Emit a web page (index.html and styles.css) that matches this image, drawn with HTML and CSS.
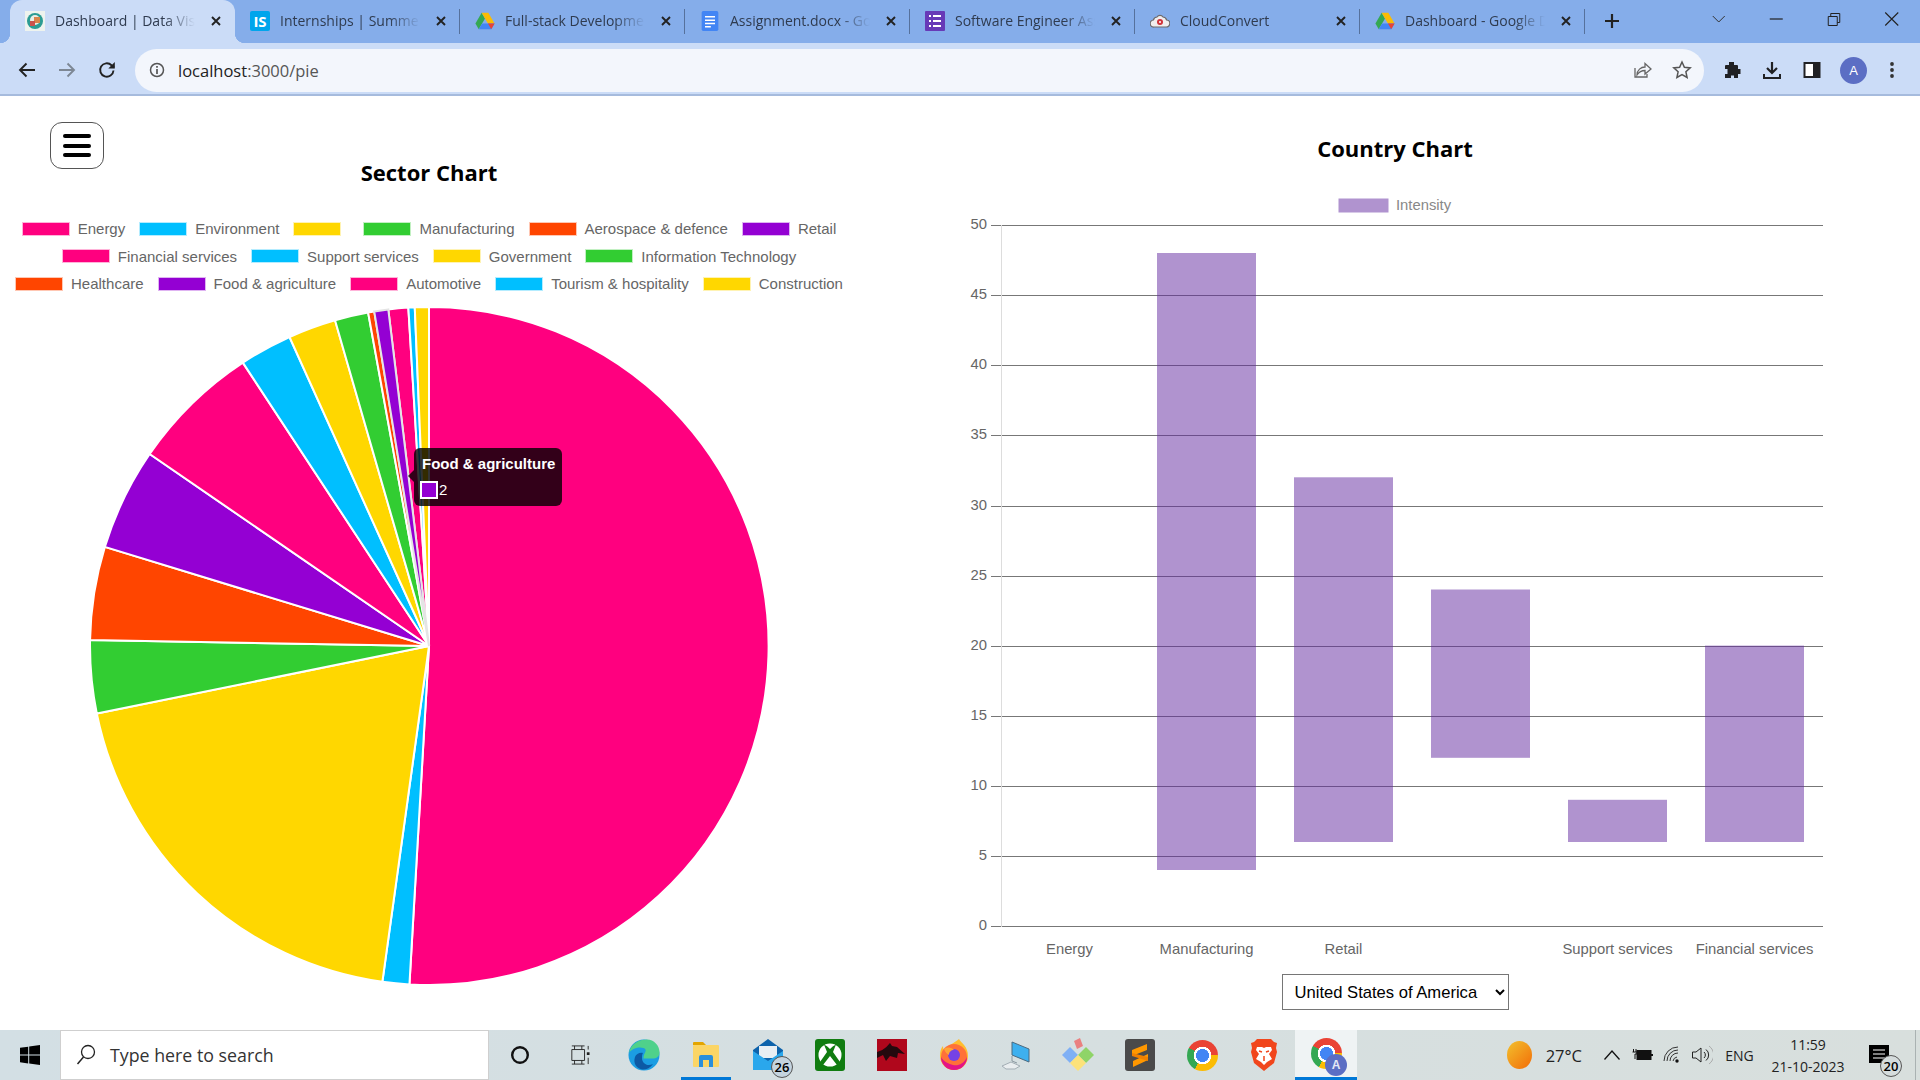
FILE: index.html
```html
<!DOCTYPE html>
<html>
<head>
    <title>Dashboard | Data Visualization</title>
    <link rel="stylesheet" href="styles.css">
</head>
<body>
    <!-- shared logos -->
    <svg class="defs" width="0" height="0">
        <symbol id="drive" viewBox="0 0 24 22">
            <polygon points="8,1 0.5,14 4.5,21 12,8" fill="#34a853"/>
            <polygon points="8,1 16,1 23.5,14 15.5,14" fill="#fbbc04"/>
            <polygon points="4.5,21 19.5,21 23.5,14 8.5,14" fill="#4285f4"/>
            <polygon points="19.5,21 23.5,14 15.5,14" fill="#ea4335"/>
        </symbol>
        <symbol id="close" viewBox="0 0 12 12">
            <path d="M2 2l8 8M10 2l-8 8" stroke="#222" stroke-width="1.9" fill="none"/>
        </symbol>
    </svg>

    <header class="tabstrip">
        <div class="tab active">
            <svg class="favicon" viewBox="0 0 20 20">
                <rect width="20" height="20" fill="#eef3ee"/>
                <circle cx="10" cy="10" r="8" fill="#2b9c93"/>
                <circle cx="10" cy="9" r="5" fill="#e8eee6"/>
                <rect x="9" y="6" width="6" height="6" fill="#d9854a"/>
                <rect x="5" y="10" width="5" height="5" fill="#c9534d"/>
            </svg>
            <span class="tab-title">Dashboard | Data Visualization</span>
            <svg class="tab-close"><use href="#close"/></svg>
        </div>
        <div class="tab sep">
            <svg class="favicon" viewBox="0 0 20 20">
                <rect width="20" height="20" rx="2" fill="#00a5ec"/>
                <text x="10" y="15.5" text-anchor="middle" class="is-mark">IS</text>
            </svg>
            <span class="tab-title">Internships | Summer Training</span>
            <svg class="tab-close"><use href="#close"/></svg>
        </div>
        <div class="tab sep">
            <svg class="favicon"><use href="#drive"/></svg>
            <span class="tab-title">Full-stack Development Assignment</span>
            <svg class="tab-close"><use href="#close"/></svg>
        </div>
        <div class="tab sep">
            <svg class="favicon" viewBox="0 0 20 24">
                <rect width="20" height="24" rx="2" fill="#4285f4"/>
                <path d="M4 7h12M4 11h12M4 15h12M4 19h7" stroke="#fff" stroke-width="1.8"/>
            </svg>
            <span class="tab-title">Assignment.docx - Google Docs</span>
            <svg class="tab-close"><use href="#close"/></svg>
        </div>
        <div class="tab sep">
            <svg class="favicon" viewBox="0 0 20 20">
                <rect width="20" height="20" rx="1" fill="#673ab7"/>
                <path d="M8 5h8M8 10h8M8 15h8M4 5h2M4 10h2M4 15h2" stroke="#fff" stroke-width="2"/>
            </svg>
            <span class="tab-title">Software Engineer Assignment</span>
            <svg class="tab-close"><use href="#close"/></svg>
        </div>
        <div class="tab sep">
            <svg class="favicon" viewBox="0 0 20 20">
                <path d="M4 16a3.5 3.5 0 0 1-.6-7A4 4 0 0 1 7 6a3.6 3.6 0 0 1 6 0 4 4 0 0 1 3.6 3A3.5 3.5 0 0 1 16 16z" fill="#f1eeee" stroke="#6d6a6a" stroke-width="1.2"/>
                <circle cx="10" cy="11" r="3" fill="#d0333a"/>
                <circle cx="10" cy="11" r="1" fill="#fff"/>
            </svg>
            <span class="tab-title">CloudConvert</span>
            <svg class="tab-close"><use href="#close"/></svg>
        </div>
        <div class="tab sep">
            <svg class="favicon"><use href="#drive"/></svg>
            <span class="tab-title">Dashboard - Google Drive</span>
            <svg class="tab-close"><use href="#close"/></svg>
        </div>
        <svg class="new-tab" viewBox="0 0 16 16">
            <path d="M8 1v14M1 8h14" stroke="#222" stroke-width="2.2"/>
        </svg>
        <div class="window-controls">
            <svg class="win-icon" viewBox="0 0 16 16"><path d="M2 5l6 6 6-6" stroke="#333" fill="none"/></svg>
            <svg class="win-icon" viewBox="0 0 16 16"><path d="M1 8h13" stroke="#222" stroke-width="1.2"/></svg>
            <svg class="win-icon" viewBox="0 0 16 16"><path d="M2.5 5.5h9v9h-9zM5 5.500v-3h9v9h-2.500" stroke="#222" fill="none"/></svg>
            <svg class="win-icon" viewBox="0 0 16 16"><path d="M1.500 1.500l13 13M14.500 1.500l-13 13" stroke="#222" stroke-width="1.100"/></svg>
        </div>
    </header>

    <div class="toolbar">
        <svg class="tool-icon first" viewBox="0 0 20 20"><path d="M18 10H3M9.500 3.500L3 10l6.500 6.500" stroke="#222" stroke-width="1.900" fill="none"/></svg>
        <svg class="tool-icon" viewBox="0 0 20 20"><path d="M2 10h15M10.500 3.500L17 10l-6.500 6.500" stroke="#7d8794" stroke-width="1.900" fill="none"/></svg>
        <svg class="tool-icon" viewBox="0 0 20 20"><path d="M16.500 10.500a6.700 6.700 0 1 1-2-5.300L17 7.500" stroke="#222" stroke-width="1.900" fill="none"/><path d="M17.800 2v6.500h-6.500z" fill="#222"/></svg>
        <div class="omnibox">
            <svg class="info-icon" viewBox="0 0 16 16">
                <circle cx="8" cy="8" r="6.500" stroke="#555" stroke-width="1.500" fill="none"/>
                <path d="M8 7v5M8 4v1.800" stroke="#555" stroke-width="1.700"/>
            </svg>
            <span class="url"><b>localhost</b>:3000/pie</span>
            <svg class="omni-icon share" viewBox="0 0 20 20">
                <path d="M3 8v9h12v-3" stroke="#666" stroke-width="1.300" fill="none"/>
                <path d="M5 15c0-5 4-8 8-8V3.500L19 9l-6 5v-3.500c-4 0-6 1.500-8 4.500z" stroke="#666" stroke-width="1.300" fill="#f3f6fc"/>
            </svg>
            <svg class="omni-icon" viewBox="0 0 20 20">
                <path d="M10 2l2.400 5.300 5.800.6-4.300 3.900 1.200 5.700L10 14.600l-5.100 2.900 1.200-5.700L1.800 7.900l5.800-.6z" stroke="#555" stroke-width="1.500" fill="none"/>
            </svg>
        </div>
        <div class="tool-actions">
            <svg class="tool-icon" viewBox="0 0 20 20"><path d="M7 2h5v3h3a1 1 0 0 1 1 1v3h2.500v5H16v4h-4v-2.500H9V18H3v-4h2.500V9H3V6a1 1 0 0 1 1-1h3z" fill="#202124"/></svg>
            <svg class="tool-icon" viewBox="0 0 20 20"><path d="M10 2v10M5 8l5 5 5-5" stroke="#202124" stroke-width="2.200" fill="none"/><path d="M2 14v4h16v-4" stroke="#202124" stroke-width="2" fill="none"/></svg>
            <svg class="tool-icon" viewBox="0 0 20 20"><rect x="2.500" y="3" width="15" height="14" fill="#fff" stroke="#202124" stroke-width="2"/><rect x="11" y="3" width="6.500" height="14" fill="#202124"/></svg>
            <span class="avatar">A</span>
            <svg class="tool-icon last" viewBox="0 0 20 20"><circle cx="10" cy="4" r="1.900" fill="#333"/><circle cx="10" cy="10" r="1.900" fill="#333"/><circle cx="10" cy="16" r="1.900" fill="#333"/></svg>
        </div>
    </div>

    <main class="content">
        <section class="sector-panel">
            <button class="menu-btn"><span></span><span></span><span></span></button>
            <h2 class="chart-title">Sector Chart</h2>
            <div class="legend">
                <div class="legend-row">
                    <span class="legend-item"><i class="pink"></i>Energy</span>
                    <span class="legend-item"><i class="blue"></i>Environment</span>
                    <span class="legend-item"><i class="gold"></i></span>
                    <span class="legend-item"><i class="green"></i>Manufacturing</span>
                    <span class="legend-item"><i class="orange"></i>Aerospace &amp; defence</span>
                    <span class="legend-item"><i class="violet"></i>Retail</span>
                </div>
                <div class="legend-row">
                    <span class="legend-item"><i class="pink"></i>Financial services</span>
                    <span class="legend-item"><i class="blue"></i>Support services</span>
                    <span class="legend-item"><i class="gold"></i>Government</span>
                    <span class="legend-item"><i class="green"></i>Information Technology</span>
                </div>
                <div class="legend-row">
                    <span class="legend-item"><i class="orange"></i>Healthcare</span>
                    <span class="legend-item"><i class="violet"></i>Food &amp; agriculture</span>
                    <span class="legend-item"><i class="pink"></i>Automotive</span>
                    <span class="legend-item"><i class="blue"></i>Tourism &amp; hospitality</span>
                    <span class="legend-item"><i class="gold"></i>Construction</span>
                </div>
            </div>
            <div class="pie-wrap">
                <svg class="pie" width="682" height="682" viewBox="0 0 680 680">
                    <g stroke="#fff" stroke-width="2">
                        <path fill="#ff007f" d="M340 340L340 2A338 338 0 1 1 320.500 677.400Z"/>
                        <path fill="#00bfff" d="M340 340L320.500 677.400A338 338 0 0 1 293.500 674.800Z"/>
                        <path fill="#ffd700" d="M340 340L293.500 674.800A338 338 0 0 1 8.800 407.400Z"/>
                        <path fill="#32cd32" d="M340 340L8.800 407.400A338 338 0 0 1 2.050 334.100Z"/>
                        <path fill="#ff4500" d="M340 340L2.050 334.100A338 338 0 0 1 16.800 241.200Z"/>
                        <path fill="#9400d3" d="M340 340L16.800 241.200A338 338 0 0 1 61.500 148.600Z"/>
                        <path fill="#ff007f" d="M340 340L61.500 148.600A338 338 0 0 1 154.400 57.500Z"/>
                        <path fill="#00bfff" d="M340 340L154.400 57.500A338 338 0 0 1 200.900 31.900Z"/>
                        <path fill="#ffd700" d="M340 340L200.900 31.900A338 338 0 0 1 246.300 15.200Z"/>
                        <path fill="#32cd32" d="M340 340L246.300 15.200A338 338 0 0 1 279.300 7.500Z"/>
                        <path fill="#ff4500" d="M340 340L279.300 7.500A338 338 0 0 1 285.400 6.400Z"/>
                        <path fill="#ff007f" d="M340 340L299.400 4.400A338 338 0 0 1 319.400 2.600Z"/>
                        <path fill="#00bfff" d="M340 340L319.400 2.600A338 338 0 0 1 325.800 2.300Z"/>
                        <path fill="#ffd700" d="M340 340L325.800 2.300A338 338 0 0 1 340 2Z"/>
                        <path fill="#9400d3" stroke="#e4e4e4" d="M340 340L285.400 6.400A338 338 0 0 1 299.400 4.400Z"/>
                    </g>
                </svg>
                <div class="pie-tooltip">
                    <div class="tip-title">Food &amp; agriculture</div>
                    <div class="tip-body"><i class="tip-swatch"></i>2</div>
                </div>
            </div>
        </section>

        <section class="country-panel">
            <h2 class="chart-title">Country Chart</h2>
            <svg class="bars" width="890" height="770" viewBox="0 0 890 770">
                <rect class="bar" x="388.500" y="8.500" width="50" height="14"/>
                <text class="axis-label legend-label" x="446" y="16">Intensity</text>

                <g class="grid">
                    <path d="M41 35.500H873M41 105.500H873M41 175.500H873M41 245.500H873M41 316.500H873M41 386.500H873M41 456.500H873M41 526.500H873M41 596.500H873M41 666.500H873M41 736.500H873"/>
                </g>
                <path class="y-axis" d="M51.500 35V737"/>

                <g class="y-ticks">
                    <text x="37" y="35.500">50</text>
                    <text x="37" y="105.500">45</text>
                    <text x="37" y="175.500">40</text>
                    <text x="37" y="245.500">35</text>
                    <text x="37" y="316">30</text>
                    <text x="37" y="386">25</text>
                    <text x="37" y="456">20</text>
                    <text x="37" y="526">15</text>
                    <text x="37" y="596">10</text>
                    <text x="37" y="666">5</text>
                    <text x="37" y="736">0</text>
                </g>

                <rect class="bar" x="207" y="63" width="99" height="617"/>
                <rect class="bar" x="344" y="287.300" width="99" height="364.700"/>
                <rect class="bar" x="481" y="399.500" width="99" height="168.300"/>
                <rect class="bar" x="618" y="609.800" width="99" height="42.200"/>
                <rect class="bar" x="755" y="455.600" width="99" height="196.400"/>

                <g class="x-ticks">
                    <text x="119.500" y="760">Energy</text>
                    <text x="256.500" y="760">Manufacturing</text>
                    <text x="393.500" y="760">Retail</text>
                    <text x="667.500" y="760">Support services</text>
                    <text x="804.500" y="760">Financial services</text>
                </g>
            </svg>
            <select class="country-select">
                <option>United States of America</option>
            </select>
        </section>
    </main>

    <footer class="taskbar">
        <div class="start">
            <svg width="20" height="20" viewBox="0 0 20 20"><path d="M0 2.800l8.200-1.100v7.900H0zM9.200 1.500L20 0v9.600H9.200zM0 10.500h8.200v7.900L0 17.200zM9.200 10.500H20V20L9.200 18.500z" fill="#000"/></svg>
        </div>
        <div class="search">
            <svg width="20" height="24" viewBox="0 0 20 24"><circle cx="12" cy="9" r="6.500" stroke="#222" stroke-width="1.300" fill="none"/><path d="M7.500 14L1.500 21" stroke="#222" stroke-width="1.500"/></svg>
            <span>Type here to search</span>
        </div>
        <div class="slot"><svg width="20" height="20" viewBox="0 0 20 20"><circle cx="10" cy="10" r="7.800" stroke="#111" stroke-width="2.400" fill="none"/></svg></div>
        <div class="slot taskview"><svg width="20" height="24" viewBox="0 0 22 24"><path d="M2 2h14M2 22h14M2 6h14v12H2zM5 2v4M13 2v4M5 18v4M13 18v4" stroke="#222" fill="none"/><rect x="18.500" y="9" width="3" height="3" fill="#222"/><path d="M20 2v4M20 15v7" stroke="#222"/></svg></div>
        <div class="slot">
            <svg width="32" height="32" viewBox="0 0 32 32">
                <circle cx="16" cy="16" r="15.500" fill="#1b9de2"/>
                <path d="M1 14C3 3 13 .5 19 .5c7 0 12.500 6 12.500 13 0 4-3 6-7 6h-9c0-5 3-7 2-9-2-3-12-3-16.500 3.500z" fill="#4fd18b"/>
                <path d="M14 19c0 5 5 9 11 6-3 4-7 6-11 5.500C8 29 5 24 7 18c1-3 5-5 8-4-1 1-1 3-1 5z" fill="#0c59a4"/>
            </svg>
        </div>
        <div class="slot underline">
            <svg width="30" height="30" viewBox="0 0 30 30">
                <path d="M2 3a1 1 0 0 1 1-1h9l3 3h-13z" fill="#e3a500"/>
                <rect x="2" y="5" width="26" height="22" rx="1" fill="#fbd566"/>
                <path d="M8 27V17a2 2 0 0 1 2-2h10a2 2 0 0 1 2 2v10h-4v-7h-6v7z" fill="#2a8fdc"/>
            </svg>
        </div>
        <div class="slot mail">
            <svg width="30" height="34" viewBox="0 0 30 34">
                <path d="M0 12L15 1l15 11v20H0z" fill="#0d62ab"/>
                <path d="M6 8h18v12H6z" fill="#e8eef3"/>
                <path d="M0 13l15 10 15-10v19H0z" fill="#2aa7ec"/>
            </svg>
            <span class="count-badge">26</span>
        </div>
        <div class="slot">
            <svg width="30" height="32" viewBox="0 0 30 32">
                <rect width="30" height="32" rx="3" fill="#107c10"/>
                <circle cx="15" cy="16" r="11.500" fill="#fff"/>
                <path d="M9 5.500Q12 6.500 15 10q3-3.500 6-4.500L18 13l7 10-3 3-7-9-7 9-3-3 7-10z" fill="#107c10"/>
            </svg>
        </div>
        <div class="slot">
            <svg width="30" height="32" viewBox="0 0 30 32">
                <rect width="30" height="32" fill="#b0071c"/>
                <path d="M0 13c8-2 12-8 13-9l2 3 5 1 8 7-7-1-1 5-7-2-4 5-3-6-6 3z" fill="#24090e"/>
            </svg>
        </div>
        <div class="slot">
            <svg width="30" height="32" viewBox="0 0 30 32">
                <path d="M20 0c2 4 9 7 9 17a14 14 0 0 1-28 0c0-5 1-8 3-10 0 3 1 4 2 5 1-5 8-7 14-12z" fill="#ffbd2e"/>
                <circle cx="15" cy="18" r="13" fill="#ff7139"/>
                <path d="M2 18a13 13 0 0 0 26 0c-3 7-9 9-14 8-4-1-9-3-12-8z" fill="#e31587"/>
                <circle cx="15" cy="16" r="6" fill="#7542e5"/>
                <path d="M5 10c4-3 8-1 10 1-3 0-5 2-5 5-2-1-4-3-5-6z" fill="#ffa436"/>
            </svg>
        </div>
        <div class="slot">
            <svg width="30" height="32" viewBox="0 0 30 32">
                <path d="M11 3l17 7v13l-17-7z" fill="#3db0ef" stroke="#4b6a80"/>
                <path d="M11 17v5l5 2" stroke="#8a979f" fill="none"/>
                <path d="M1 27l9-4 9 4-5 3H5z" fill="#e9edef" stroke="#a3aeb5"/>
            </svg>
        </div>
        <div class="slot">
            <svg width="32" height="34" viewBox="0 0 32 34">
                <polygon points="0,17 8,9 16,17 8,25" fill="#7fb0f5"/>
                <polygon points="16,17 24,9 32,17 24,25" fill="#8fd468"/>
                <polygon points="8,25 16,17 24,25 16,33" fill="#fce27a"/>
                <polygon points="12,3 18,0 21,8 15,11" fill="#ea8080"/>
            </svg>
        </div>
        <div class="slot">
            <svg width="30" height="32" viewBox="0 0 30 32">
                <rect width="30" height="32" rx="3" fill="#4a4a4a"/>
                <path d="M22 5v6L7 17v-6zM23 15v6L8 28v-6z" fill="#ff9800"/>
                <path d="M7 14l16 4v4L7 17z" fill="#f08000"/>
            </svg>
        </div>
        <div class="slot"><span class="chrome-logo"></span></div>
        <div class="slot">
            <svg width="26" height="32" viewBox="0 0 26 32">
                <path d="M6 0h14l3 3 3 1-1 5 1 4-3 11-10 8L3 24 0 13l1-4-1-5 3-1z" fill="#f1461c"/>
                <path d="M6 8h5l2 1 2-1h5l1 3-3 4 3 5-5 3-3 3-3-3-5-3 3-5-3-4z" fill="#fff"/>
                <path d="M8 12l3 1M18 12l-3 1M13 17v5" stroke="#f1461c" stroke-width="1.500"/>
            </svg>
        </div>
        <div class="slot current">
            <span class="chrome-logo"></span>
            <span class="profile-badge">A</span>
        </div>

        <div class="tray">
            <div class="weather"><i class="sun"></i><span>27°C</span></div>
            <div class="tray-icon"><svg width="18" height="12" viewBox="0 0 18 12"><path d="M1.500 10.500L9 2l7.500 8.500" stroke="#111" stroke-width="1.300" fill="none"/></svg></div>
            <div class="tray-icon"><svg width="22" height="14" viewBox="0 0 22 14"><rect x="6" y="2.500" width="14" height="9" fill="#111" stroke="#111"/><path d="M20 6h2v2h-2z" fill="#111"/><path d="M2.500 1v3M5 1v3M1.500 4h4.500v2H4v5" stroke="#111" fill="none"/></svg></div>
            <div class="tray-icon"><svg width="18" height="18" viewBox="0 0 18 18"><path d="M1 15A14 14 0 0 1 15 1M4 15A11 11 0 0 1 15 4M7 15a8 8 0 0 1 8-8M10 15a5 5 0 0 1 4-4" stroke="#333" fill="none"/><circle cx="14" cy="15" r="1.700" fill="#111"/></svg></div>
            <div class="tray-icon"><svg width="22" height="20" viewBox="0 0 22 20"><path d="M1.500 7v6h3.500l5 4V3L5 7z" stroke="#222" fill="none"/><path d="M13 7a4 4 0 0 1 0 6M15 4.500a7 7 0 0 1 0 11" stroke="#222" fill="none"/><path d="M18 1a11 11 0 0 1 0 18" stroke="#aaa" fill="none"/></svg></div>
            <div class="lang">ENG</div>
            <div class="clock"><span>11:59</span><span>21-10-2023</span></div>
            <div class="notify">
                <svg width="20" height="20" viewBox="0 0 20 20"><path d="M0 0h20v18H0z" fill="#000"/><path d="M4 5h12M4 9h12M4 13h12" stroke="#fff"/></svg>
                <span class="count-badge">20</span>
            </div>
            <div class="show-desktop"></div>
        </div>
    </footer>
</body>
</html>
```

FILE: styles.css
```css
* {
    box-sizing: border-box;
}
body {
    margin: 0;
    width: 1920px;
    height: 1080px;
    overflow: hidden;
    display: flex;
    flex-direction: column;
    background: #ffffff;
    font-family: "Liberation Sans", Arial, sans-serif;
}
.defs {
    display: block;
    height: 0;
}

/* browser tabs */
.tabstrip {
    display: flex;
    align-items: center;
    height: 43px;
    padding-left: 10px;
    background: #85adea;
}
.tab {
    display: flex;
    align-items: center;
    width: 225px;
    height: 43px;
    padding: 0 13px 2px 15px;
    color: #2f3b4f;
    font-family: "Open Sans", sans-serif;
    font-size: 14px;
}
.tab.sep {
    background: linear-gradient(#56719c, #56719c) right 9px / 1px 25px no-repeat;
}
.tab.active {
    position: relative;
    background: #cbdcf7;
    border-radius: 12px 12px 0 0;
}
.tab.active::before,
.tab.active::after {
    content: "";
    position: absolute;
    bottom: 0;
    width: 10px;
    height: 10px;
}
.tab.active::before {
    left: -10px;
    background: radial-gradient(circle at 0 0, transparent 10px, #cbdcf7 10.500px);
}
.tab.active::after {
    right: -10px;
    background: radial-gradient(circle at 100% 0, transparent 10px, #cbdcf7 10.500px);
}
.favicon {
    flex: none;
    width: 20px;
    height: 20px;
}
.is-mark {
    fill: #ffffff;
    font-family: "Open Sans", sans-serif;
    font-size: 15px;
    font-weight: 700;
}
.tab-title {
    flex: 1;
    margin: 0 15px 0 10px;
    overflow: hidden;
    white-space: nowrap;
    -webkit-mask-image: linear-gradient(to right, #000 78%, transparent);
    mask-image: linear-gradient(to right, #000 78%, transparent);
}
.tab-close {
    flex: none;
    width: 12px;
    height: 12px;
}
.new-tab {
    width: 16px;
    height: 16px;
    margin-left: 19px;
    margin-bottom: 2px;
}
.window-controls {
    display: flex;
    margin-left: auto;
    margin-bottom: 6px;
}
.win-icon {
    width: 57.500px;
    height: 16px;
}

/* address bar row */
.toolbar {
    display: flex;
    align-items: center;
    height: 53px;
    padding-top: 3px;
    background: #cbdcf7;
    border-bottom: 2px solid #a6bbdd;
}
.tool-icon {
    flex: none;
    width: 20px;
    height: 20px;
    margin-right: 20px;
}
.tool-icon.first {
    margin-left: 17px;
}
.tool-icon.last {
    margin-right: 0;
}
.omnibox {
    flex: none;
    display: flex;
    align-items: center;
    width: 1569px;
    height: 43px;
    margin-left: -2px;
    padding: 0 12px 0 14px;
    background: #f3f6fc;
    border-radius: 22px;
}
.info-icon {
    width: 16px;
    height: 16px;
}
.url {
    flex: 1;
    margin-left: 13px;
    color: #555;
    font-family: "Open Sans", sans-serif;
    font-size: 16.500px;
}
.url b {
    color: #222;
    font-weight: 400;
}
.omni-icon {
    width: 20px;
    height: 20px;
}
.omni-icon.share {
    margin-right: 20px;
}
.tool-actions {
    display: flex;
    align-items: center;
    margin-left: 18px;
}
.avatar {
    flex: none;
    width: 27px;
    height: 27px;
    margin: 0 15px 0 -2px;
    border-radius: 50%;
    background: #5b6ec4;
    color: #ffffff;
    font-size: 13px;
    line-height: 27px;
    text-align: center;
}

/* page */
.content {
    flex: 1;
    display: grid;
    grid-template-columns: 858px 1fr;
    background: #ffffff;
}
.sector-panel {
    position: relative;
    padding-top: 61px;
}
.country-panel {
    display: flex;
    flex-direction: column;
    align-items: center;
    padding: 37px 0 0 12px;
}
.chart-title {
    margin: 0;
    height: 30px;
    color: #000000;
    font-family: "Open Sans", sans-serif;
    font-size: 22px;
    font-weight: 700;
    line-height: 30px;
    text-align: center;
}
.menu-btn {
    position: absolute;
    left: 50px;
    top: 26px;
    display: flex;
    flex-direction: column;
    align-items: center;
    justify-content: center;
    gap: 5.500px;
    width: 54px;
    height: 47px;
    padding: 0;
    background: #ffffff;
    border: 1px solid #555;
    border-radius: 12px;
}
.menu-btn span {
    width: 28px;
    height: 4px;
    background: #000000;
    border-radius: 2px;
}
.legend {
    margin-top: 28px;
}
.legend-row {
    display: flex;
    justify-content: center;
    align-items: center;
    gap: 14px;
    height: 27.500px;
    color: #666;
    font-size: 15px;
}
.legend-item {
    display: flex;
    align-items: center;
    white-space: nowrap;
}
.legend-item i {
    width: 48px;
    height: 14px;
    margin-right: 8px;
    border: 1px solid rgba(255, 255, 255, 0.7);
}
.pink { background: #ff007f; }
.blue { background: #00bfff; }
.gold { background: #ffd700; }
.green { background: #32cd32; }
.orange { background: #ff4500; }
.violet { background: #9400d3; }
.pie-wrap {
    position: relative;
    width: 682px;
    height: 682px;
    margin: 7px 0 0 87.500px;
}
.pie {
    display: block;
}
.pie-tooltip {
    position: absolute;
    left: 326.500px;
    top: 143px;
    width: 148px;
    height: 58px;
    padding: 7px 8px;
    background: rgba(0, 0, 0, 0.8);
    border-radius: 6px;
    color: #ffffff;
    font-size: 15px;
}
.pie-tooltip::before {
    content: "";
    position: absolute;
    left: -6px;
    top: 22px;
    border-style: solid;
    border-width: 6px 6px 6px 0;
    border-color: transparent rgba(0, 0, 0, 0.8) transparent transparent;
}
.tip-title {
    font-weight: 700;
    line-height: 18px;
    white-space: nowrap;
}
.tip-body {
    display: flex;
    align-items: center;
    margin-top: 8px;
    margin-left: -2px;
    line-height: 17px;
}
.tip-swatch {
    width: 18px;
    height: 18px;
    margin-right: 1px;
    background: #9400d3;
    border: 2px solid #ffffff;
}

/* country bars */
.bars {
    display: block;
    margin-top: 27px;
}
.grid path {
    stroke: #777;
    stroke-width: 1;
    fill: none;
}
.y-axis {
    stroke: #ddd;
    fill: none;
}
.bar {
    fill: rgba(97, 39, 159, 0.5);
}
.y-ticks text,
.x-ticks text,
.axis-label {
    fill: #666;
    font-size: 14.800px;
    dominant-baseline: middle;
}
.y-ticks text {
    text-anchor: end;
}
.x-ticks text {
    text-anchor: middle;
}
.legend-label {
    fill: #888;
}
.country-select {
    width: 227px;
    height: 36px;
    margin-top: 14px;
    padding-left: 8px;
    background: #ffffff;
    border: 1px solid #767676;
    color: #000000;
    font-family: "Liberation Sans", Arial, sans-serif;
    font-size: 16.600px;
}

/* windows taskbar */
.taskbar {
    display: flex;
    align-items: stretch;
    height: 50px;
    background: linear-gradient(to right, #d3dfe4, #d8dfdd);
}
.start {
    display: flex;
    align-items: center;
    justify-content: center;
    width: 60px;
}
.search {
    display: flex;
    align-items: center;
    gap: 14px;
    width: 429px;
    padding-left: 15px;
    background: #ffffff;
    border: 1px solid #cfcfcf;
    color: #333;
    font-family: "Open Sans", sans-serif;
    font-size: 17.800px;
}
.slot {
    position: relative;
    display: flex;
    align-items: center;
    justify-content: center;
    width: 62px;
}
.slot.taskview {
    padding-right: 5px;
}
.slot.underline {
    background: linear-gradient(#0078d7, #0078d7) center bottom / 50px 3px no-repeat;
}
.slot.current {
    background: #eff3f4;
    border-bottom: 3px solid #0078d7;
}
.chrome-logo {
    width: 31px;
    height: 31px;
    border-radius: 50%;
    background:
        radial-gradient(circle, #4285f4 0 29%, #ffffff 30% 40%, transparent 41%),
        conic-gradient(from -60deg, #ea4335 0 150deg, #fbbc04 150deg 270deg, #34a853 270deg 360deg);
}
.profile-badge {
    position: absolute;
    left: 30px;
    top: 24px;
    width: 22px;
    height: 22px;
    border-radius: 50%;
    background: #5b6ec4;
    color: #e4e8f6;
    font-size: 12px;
    font-weight: 700;
    line-height: 22px;
    text-align: center;
}
.count-badge {
    position: absolute;
    width: 22px;
    height: 22px;
    border-radius: 50%;
    background: #c5d4df;
    border: 1px solid #555;
    color: #000000;
    font-family: "Open Sans", sans-serif;
    font-size: 13px;
    font-weight: 600;
    line-height: 20px;
    text-align: center;
}
.mail .count-badge {
    left: 34px;
    top: 26px;
}
.tray {
    display: flex;
    align-items: center;
    margin-left: auto;
    color: #222;
    font-family: "Open Sans", sans-serif;
    font-size: 15px;
}
.weather {
    display: flex;
    align-items: center;
    gap: 14px;
    padding-right: 15px;
    font-size: 16.500px;
}
.sun {
    width: 25px;
    height: 28px;
    border-radius: 50%;
    background: linear-gradient(135deg, #f2c12e, #f36c07);
}
.tray-icon {
    display: flex;
    align-items: center;
    justify-content: center;
    width: 30px;
}
.lang {
    width: 45px;
    font-size: 14px;
    text-align: center;
}
.clock {
    display: flex;
    flex-direction: column;
    align-items: center;
    gap: 3px;
    width: 92px;
    font-size: 14px;
    line-height: 19px;
}
.notify {
    position: relative;
    display: flex;
    align-items: center;
    justify-content: center;
    width: 50px;
    height: 50px;
}
.notify .count-badge {
    left: 26px;
    top: 25px;
    background: #d5dcdc;
}
.show-desktop {
    width: 16px;
    height: 50px;
    background: linear-gradient(#aab2b2, #aab2b2) 11px 0 / 1px 50px no-repeat;
}
```
